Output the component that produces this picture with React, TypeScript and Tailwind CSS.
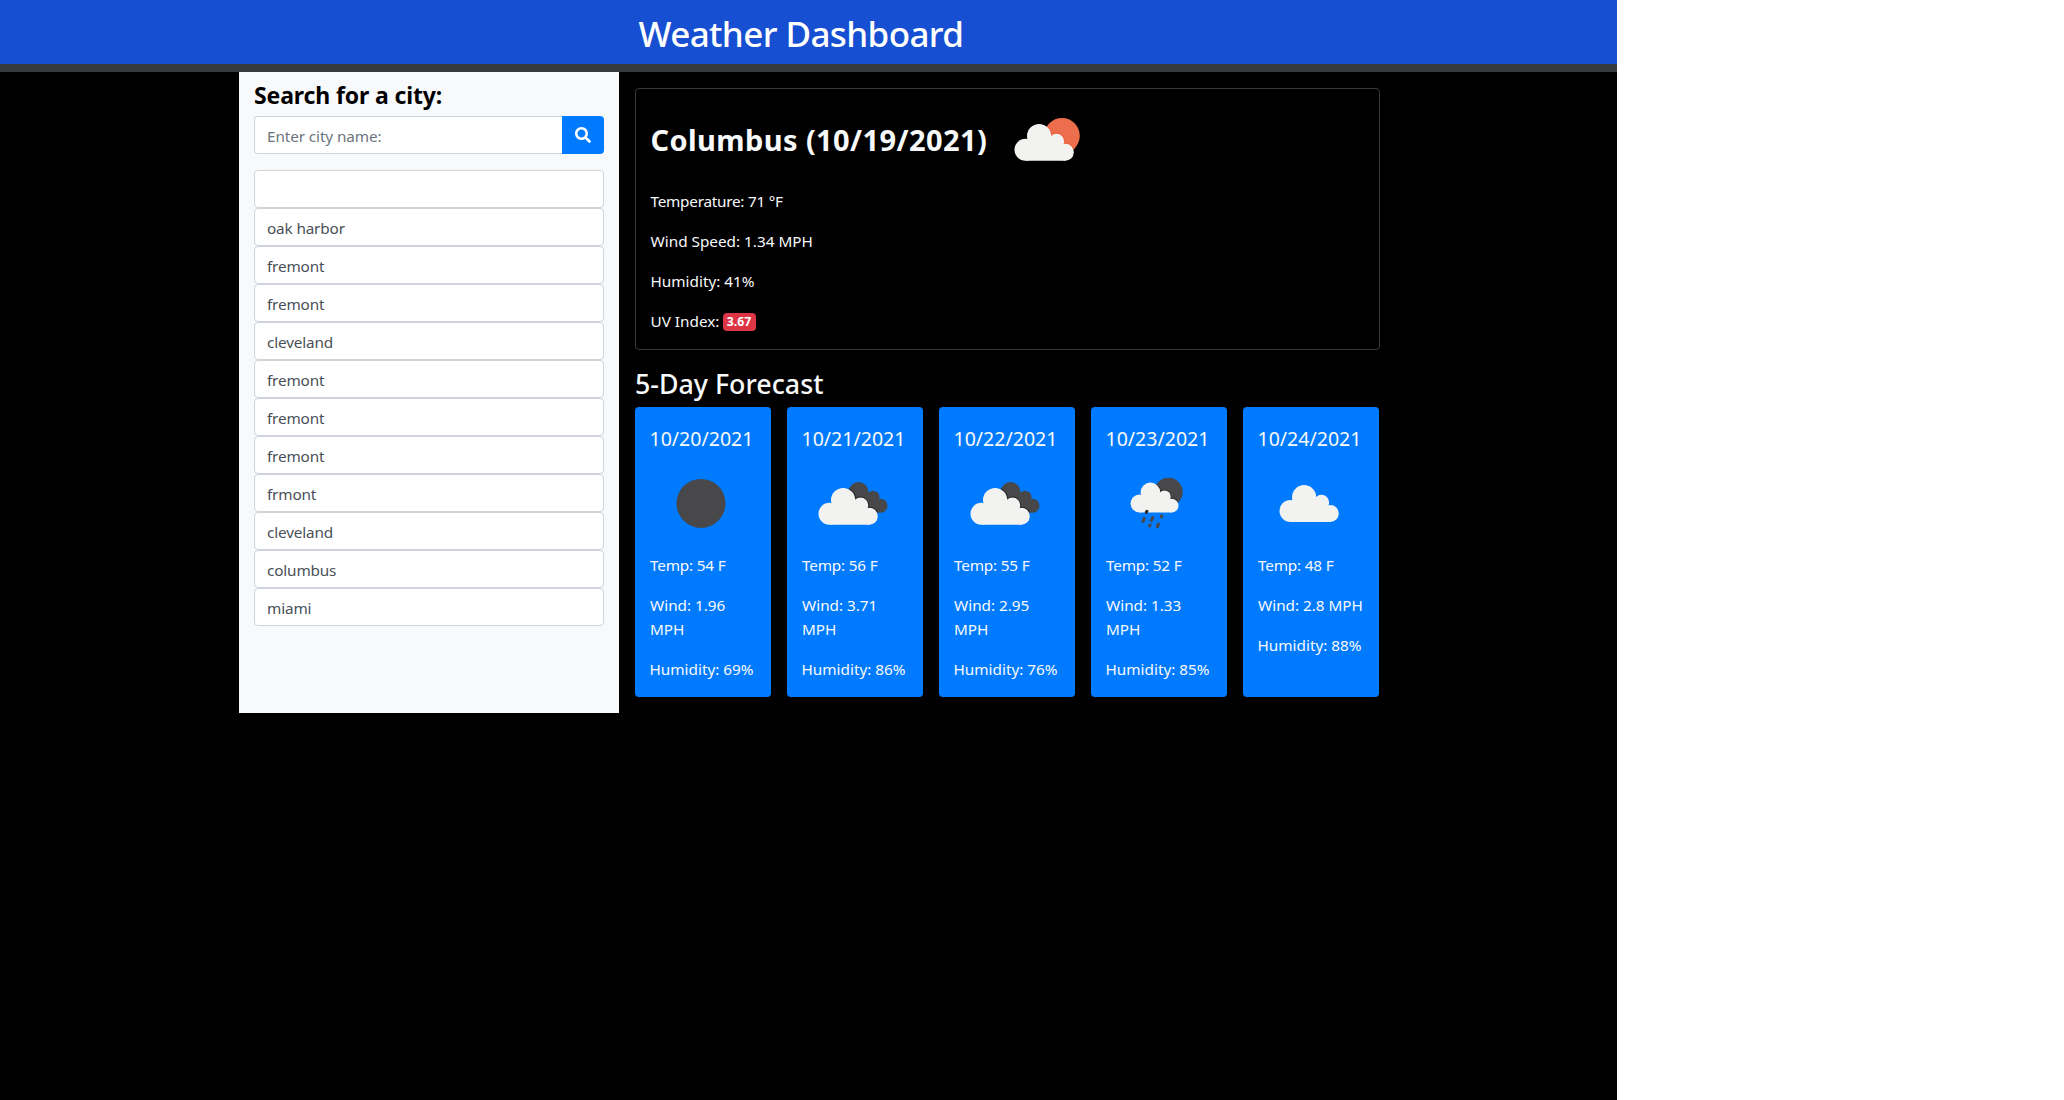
import { useId } from "react";
import type { ReactNode } from "react";
import { FaSearch } from "react-icons/fa";

type IconKind = "moon" | "few" | "broken" | "rain" | "cloud";

interface Day {
  date: string;
  icon: IconKind;
  temp: string;
  wind: string;
  humidity: string;
}

const history = [
  "",
  "oak harbor",
  "fremont",
  "fremont",
  "cleveland",
  "fremont",
  "fremont",
  "fremont",
  "frmont",
  "cleveland",
  "columbus",
  "miami",
];

const days: Day[] = [
  { date: "10/20/2021", icon: "moon", temp: "54", wind: "1.96", humidity: "69" },
  { date: "10/21/2021", icon: "broken", temp: "56", wind: "3.71", humidity: "86" },
  { date: "10/22/2021", icon: "broken", temp: "55", wind: "2.95", humidity: "76" },
  { date: "10/23/2021", icon: "rain", temp: "52", wind: "1.33", humidity: "85" },
  { date: "10/24/2021", icon: "cloud", temp: "48", wind: "2.8", humidity: "88" },
];

// Cloud silhouette with its origin at the bottom-left corner, 59 wide and 37 tall.
const cloud = (
  <>
    <circle cx="11" cy="-11" r="11" />
    <circle cx="24.6" cy="-24.7" r="12.1" />
    <circle cx="42" cy="-19.4" r="7.7" />
    <circle cx="50.8" cy="-8.5" r="8.5" />
    <path d="M11 0 V-12 L24 -26 L42 -19 L51 -8 V0 Z" />
  </>
);

const darkCloud = (
  <>
    <circle cx="55.5" cy="39" r="10" />
    <circle cx="70" cy="44.2" r="6.5" />
    <circle cx="77.5" cy="52.8" r="7" />
    <path d="M55 45 L70 40 L77 50 L76 59.6 L60 60 Z" />
  </>
);

const moonBehind = <circle cx="61.5" cy="39" r="14.2" />;
const sunBehind = <circle cx="63" cy="46.8" r="17.8" />;

interface LayeredProps {
  behind: ReactNode;
  behindFill: string;
  edge: string;
  transform: string;
}

// A cloud in front of another shape, with a thin edge where the two meet.
function LayeredCloud({ behind, behindFill, edge, transform }: LayeredProps) {
  const id = useId();
  return (
    <>
      <clipPath id={id}>{behind}</clipPath>
      <g fill={behindFill}>{behind}</g>
      <g clipPath={`url(#${id})`}>
        <g transform={transform} stroke={edge} strokeWidth="2">
          {cloud}
        </g>
      </g>
      <g transform={transform} fill="#f2f2f0">
        {cloud}
      </g>
    </>
  );
}

function WeatherIcon({ kind }: { kind: IconKind }) {
  return (
    <svg width="100" height="100" viewBox="0 0 100 100" className="block shrink-0">
      {kind === "moon" && <circle cx="50" cy="50.4" r="24.5" fill="#48484a" />}
      {kind === "few" && (
        <LayeredCloud behind={sunBehind} behindFill="#ec6e4c" edge="#ee5f38" transform="translate(15.5 71.8)" />
      )}
      {kind === "broken" && (
        <LayeredCloud behind={darkCloud} behindFill="#48484a" edge="#222224" transform="translate(15.5 71.7)" />
      )}
      {kind === "rain" && (
        <>
          <LayeredCloud
            behind={moonBehind}
            behindFill="#48484a"
            edge="#2a2a2c"
            transform="translate(23.5 59.4) scale(0.81)"
          />
          <g stroke="#48484a" strokeWidth="3.2" strokeLinecap="round">
            <path d="M39.9 58.4 L39.3 59.2" stroke="#2c2c2e" />
            <path d="M37.2 65.6 L36 68.4" />
            <path d="M45.8 64.6 L44.4 67.4" />
            <path d="M54.7 63 L54.3 63.8" />
            <path d="M43 72.2 L42.6 72.8" />
            <path d="M51.4 71.2 L50.4 73.8" />
          </g>
        </>
      )}
      {kind === "cloud" && (
        <g transform="translate(20.5 68.9)" fill="#f2f2f0">
          {cloud}
        </g>
      )}
    </svg>
  );
}

function ForecastCard({ day }: { day: Day }) {
  return (
    <article className="h-[290px] w-[136px] rounded bg-[#007bff] pt-5 pr-[14px] pl-[14.5px]">
      <h5 className="mb-0.5 text-[19.55px] leading-6 whitespace-nowrap">{day.date}</h5>
      <div className="ml-px w-[100px]">
        <WeatherIcon kind={day.icon} />
      </div>
      <p className="mb-4 ml-[0.5px] tracking-[-0.18px]">Temp: {day.temp} F</p>
      <p className="mb-4 ml-[0.5px] tracking-[-0.02px]">Wind: {day.wind} MPH</p>
      <p className="whitespace-nowrap">Humidity: {day.humidity}%</p>
    </article>
  );
}

export default function App() {
  return (
    <div className="min-h-[1100px] bg-white font-['Noto_Sans',sans-serif] text-[15.3px] leading-6 text-[#f8f9fa]">
      <div className="h-[1100px] w-[1617px] bg-black">
        <header className="h-[72px] border-b-8 border-[#343a40] bg-[#164fd1] pt-[10px] pl-[638.5px]">
          <h1 className="text-[35px] leading-[48px] font-medium tracking-[-0.6px] whitespace-nowrap text-white">
            Weather Dashboard
          </h1>
        </header>

        <main className="ml-[239px] flex w-[1141px]">
          <aside className="h-[641px] w-[380px] bg-[#f8f9fa] pt-[9px] pl-[15px]">
            <h4 className="mb-1.5 text-[23px] leading-[29px] font-bold tracking-[-0.13px] text-black">
              Search for a city:
            </h4>
            <form className="flex h-[38px] w-[350px]" onSubmit={(e) => e.preventDefault()}>
              <input
                type="text"
                placeholder="Enter city name:"
                className="min-w-0 flex-1 rounded-l border border-r-0 border-[#ced4da] bg-white pt-0.5 pl-3 tracking-[-0.1px] text-[#495057] outline-none placeholder:text-[#6c757d]"
              />
              <button
                type="submit"
                aria-label="Search"
                className="flex w-[42px] items-center justify-center rounded-r bg-[#007bff] text-base text-white"
              >
                <FaSearch />
              </button>
            </form>
            <ul className="mt-4 w-[350px]">
              {history.map((city, i) => (
                <li
                  key={i}
                  className="h-[38px] rounded border border-[#ced4da] bg-white pt-[7px] pl-3 tracking-[-0.15px] text-[#495057]"
                >
                  {city}
                </li>
              ))}
            </ul>
          </aside>

          <section className="flex-1 pt-4 pl-4">
            <div className="h-[262px] rounded border border-[#343a40] pl-[14.5px]">
              <div className="flex h-[100px] items-center">
                <h2 className="w-[348px] shrink-0 pt-0.5 text-[29px] leading-9 font-bold tracking-[0.4px] whitespace-nowrap">
                  Columbus (10/19/2021)
                </h2>
                <WeatherIcon kind="few" />
              </div>
              <p className="mb-4 tracking-[-0.25px]">Temperature: 71 °F</p>
              <p className="mb-4">Wind Speed: 1.34 MPH</p>
              <p className="mb-4">Humidity: 41%</p>
              <p className="flex h-6 items-start">
                <span className="w-[72px] whitespace-nowrap">UV Index:</span>
                <span className="mt-1 flex h-[18px] w-[33px] items-center justify-center rounded bg-[#dc3545] pt-px text-[12.2px] leading-none font-bold text-white">
                  3.67
                </span>
              </p>
            </div>

            <h3 className="mt-[17px] mb-1.5 text-[26.8px] leading-[34px] font-medium">5-Day Forecast</h3>
            <div className="flex gap-4">
              {days.map((day) => (
                <ForecastCard key={day.date} day={day} />
              ))}
            </div>
          </section>
        </main>
      </div>
    </div>
  );
}
